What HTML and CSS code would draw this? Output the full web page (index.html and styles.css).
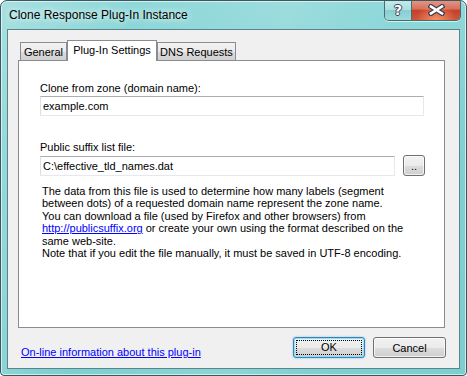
FILE: index.html
```html
<!DOCTYPE html>
<html lang="en">
<head>
    <meta charset="UTF-8">
    <title>Clone Response Plug-In Instance</title>
    <link rel="stylesheet" href="styles.css">
</head>
<body>
    <div class="window">
        <div class="titlebar">
            <span class="title">Clone Response Plug-In Instance</span>
            <div class="caption-buttons">
                <div class="cap-btn help">?</div>
                <div class="cap-btn close">
                    <svg width="17" height="12" viewBox="0 0 17 12">
                        <path d="M3 2.5 L14 9.5 M14 2.5 L3 9.5" stroke="#3a3f52" stroke-width="5" stroke-linecap="square"/>
                        <path d="M3 2.5 L14 9.5 M14 2.5 L3 9.5" stroke="#ffffff" stroke-width="2.6" stroke-linecap="square"/>
                    </svg>
                </div>
            </div>
        </div>

        <div class="client">
            <div class="tabs">
                <div class="tab general">General</div>
                <div class="tab active">Plug-In Settings</div>
                <div class="tab dns">DNS Requests</div>
            </div>

            <div class="tab-panel">
                <div class="field-label">Clone from zone (domain name):</div>
                <input class="textbox zone" type="text" value="example.com">

                <div class="field-label suffix">Public suffix list file:</div>
                <div class="file-row">
                    <input class="textbox file" type="text" value="C:\effective_tld_names.dat">
                    <button class="btn browse">..</button>
                </div>

                <p class="note">
                    The data from this file is used to determine how many labels (segment<br>
                    between dots) of a requested domain name represent the zone name.<br>
                    You can download a file (used by Firefox and other browsers) from<br>
                    <a href="#">http://publicsuffix.org</a> or create your own using the format described on the<br>
                    same web-site.<br>
                    Note that if you edit the file manually, it must be saved in UTF-8 encoding.
                </p>
            </div>

            <div class="footer">
                <a href="#" class="info-link">On-line information about this plug-in</a>
                <div class="actions">
                    <button class="btn ok"><span class="focus">OK</span></button>
                    <button class="btn cancel">Cancel</button>
                </div>
            </div>
        </div>
    </div>
</body>
</html>
```

FILE: styles.css
```css
body {
    margin: 0;
    font-family: "Liberation Sans", Arial, sans-serif;
    font-size: 11px;
    color: #000;
    background: #fff;
}

.window {
    width: 467px;
    height: 376px;
    box-sizing: border-box;
    border: 1px solid #3b5860;
    border-radius: 7px 7px 4px 4px;
    padding: 0 6px 6px 6px;
    background:
        linear-gradient(100deg, rgba(255,255,255,0.22) 0%, rgba(255,255,255,0) 25%, rgba(255,255,255,0.12) 55%, rgba(255,255,255,0) 75%),
        linear-gradient(to bottom, #8fd8d9 0%, #7fd1d2 40%, #7ccfd0 100%);
    box-shadow: inset 0 0 0 1px rgba(255,255,255,0.6);
    overflow: hidden;
}

.titlebar {
    height: 28px;
    display: flex;
    justify-content: space-between;
}

.title {
    font-family: "Segoe UI", "Liberation Sans", Arial, sans-serif;
    font-size: 12px;
    color: #000;
    padding: 7px 0 0 2px;
    text-shadow: 0 0 6px rgba(255,255,255,0.9), 0 0 10px rgba(255,255,255,0.6);
}

.caption-buttons {
    display: flex;
    height: 20px;
    margin: -1px -1px 0 0;
    border: 1px solid #4d6a73;
    border-top: none;
    border-radius: 0 0 5px 5px;
    overflow: hidden;
    box-shadow: 0 1px 0 rgba(255,255,255,0.6);
}

.cap-btn {
    display: flex;
    align-items: center;
    justify-content: center;
}

.cap-btn.help {
    width: 26px;
    border-right: 1px solid #4d6a73;
    background: linear-gradient(to bottom, #c4ecec 0%, #a9e0e1 48%, #86cfd1 52%, #9ed9db 100%);
    font-family: "DejaVu Sans", sans-serif;
    font-weight: bold;
    font-size: 14px;
    color: #fff;
    text-shadow: 1px 0 0 #3a3f52, -1px 0 0 #3a3f52, 0 1px 0 #3a3f52, 0 -1px 0 #3a3f52;
}

.cap-btn.close {
    width: 48px;
    background:
        radial-gradient(ellipse at 50% 100%, rgba(255,160,110,0.8) 0%, rgba(255,160,110,0) 60%),
        linear-gradient(to bottom, #e39a8a 0%, #d6705a 45%, #c4402a 52%, #ca563b 100%);
}

.client {
    height: 340px;
    box-sizing: border-box;
    border: 1px solid #5f8288;
    background: #f0f0f0;
    padding: 10px 14px 0 10px;
}

.tabs {
    display: flex;
    align-items: flex-end;
    height: 20px;
    padding-left: 2px;
}

.tab {
    height: 18px;
    box-sizing: border-box;
    border: 1px solid #898c95;
    border-bottom: none;
    background: linear-gradient(to bottom, #f2f2f2 0%, #ebebeb 50%, #dddddd 51%, #cfcfcf 100%);
    text-align: center;
    line-height: 18px;
}

.tab.general {
    width: 47px;
}

.tab.dns {
    width: 79px;
}

.tab.active {
    width: 90px;
    height: 21px;
    margin-bottom: -1px;
    background: #fff;
    position: relative;
    z-index: 1;
    line-height: 18px;
}

.tab-panel {
    height: 268px;
    box-sizing: border-box;
    border: 1px solid #898c95;
    background: #fff;
    padding: 21px 19px 0 21px;
}

.field-label {
    line-height: 13px;
}

.field-label.suffix {
    margin-top: 25px;
}

.textbox {
    display: block;
    box-sizing: border-box;
    height: 20px;
    margin: 1px 0 0 0;
    padding: 0 2px;
    border: 1px solid #e3e9ef;
    border-top-color: #abadb3;
    border-left-color: #dbdfe6;
    font-family: "Liberation Sans", Arial, sans-serif;
    font-size: 11px;
    color: #000;
    background: #fff;
    outline: none;
}

.textbox.zone {
    width: 384px;
}

.file-row {
    display: flex;
    align-items: center;
    gap: 8px;
    margin-top: 1px;
}

.textbox.file {
    width: 355px;
    margin: 0;
}

.btn {
    box-sizing: border-box;
    height: 21px;
    border: 1px solid #707070;
    border-radius: 3px;
    background: linear-gradient(to bottom, #f2f2f2 0%, #ebebeb 50%, #dddddd 51%, #cfcfcf 100%);
    box-shadow: inset 0 0 0 1px rgba(255,255,255,0.7);
    font-family: "Liberation Sans", Arial, sans-serif;
    font-size: 11px;
    color: #000;
    padding: 0;
}

.btn.browse {
    width: 22px;
    line-height: 14px;
}

.note {
    margin: 9px 0 0 2px;
    line-height: 12.4px;
}

.note a,
.info-link {
    color: #0000ff;
    text-decoration: underline;
}

.footer {
    display: flex;
    justify-content: space-between;
    align-items: flex-start;
    padding-top: 9px;
}

.info-link {
    margin: 9px 0 0 3px;
    line-height: 13px;
}

.actions {
    display: flex;
    gap: 8px;
    margin-right: -1px;
}

.btn.ok {
    width: 72px;
    border-color: #3c7fb1;
    box-shadow: 0 0 2px #5fc3f0, inset 0 0 0 1px #8ee0ff;
    padding: 2px;
}

.btn.ok .focus {
    display: block;
    height: 100%;
    box-sizing: border-box;
    border: 1px dotted #000;
    line-height: 13px;
}

.btn.cancel {
    width: 73px;
}
```
